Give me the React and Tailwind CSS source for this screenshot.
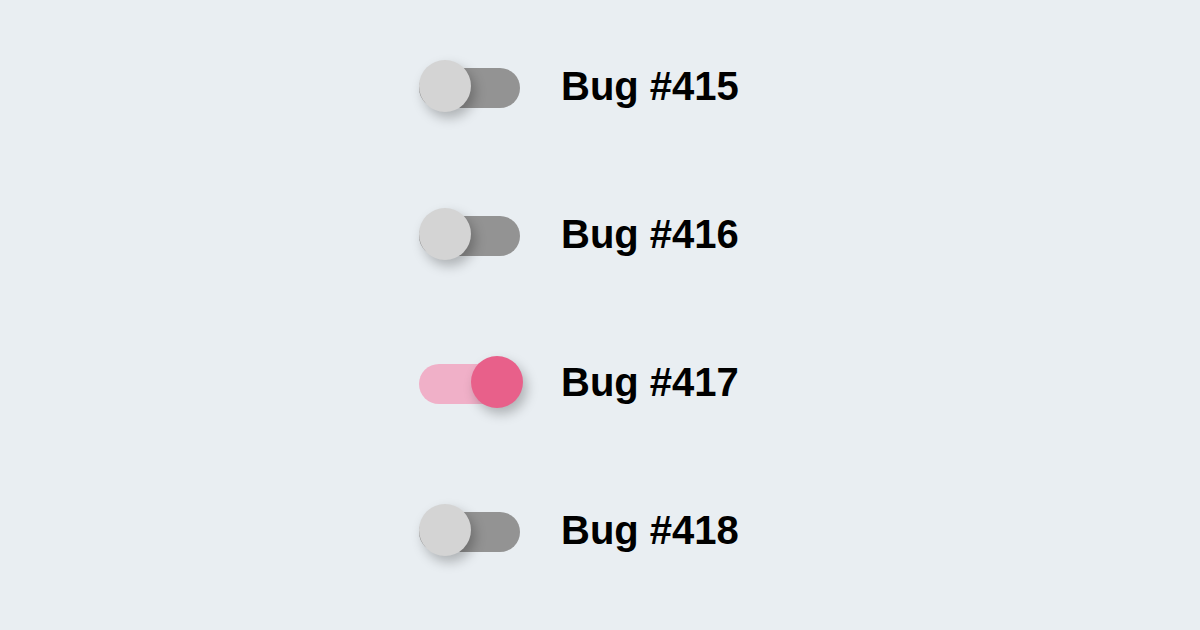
export default function App() {
  const rows = [
    { label: "Bug #415", on: false },
    { label: "Bug #416", on: false },
    { label: "Bug #417", on: true },
    { label: "Bug #418", on: false },
  ];
  return (
    <div className="w-[1200px] h-[630px] bg-[#e9eef2] overflow-hidden" style={{ fontFamily: '"Liberation Sans", Arial, sans-serif' }}>
      <div className="flex flex-col gap-[96px] pt-[62px] pl-[419px]">
        {rows.map((r) => (
          <div key={r.label} className="flex items-center h-[52px] gap-[41px]">
            <div className={`relative w-[101px] h-10 rounded-full ${r.on ? "bg-[#f0b0c8]" : "bg-[#939393]"}`}>
              <div
                className={`absolute top-[-8px] w-[52px] h-[52px] rounded-full shadow-[4px_6px_12px_rgba(0,0,0,0.25)] ${
                  r.on ? "left-[52px] bg-[#e8608a]" : "left-0 bg-[#d4d4d4]"
                }`}
              />
            </div>
            <span className="text-[40px] font-bold text-black leading-none mb-[4px]">{r.label}</span>
          </div>
        ))}
      </div>
    </div>
  );
}
